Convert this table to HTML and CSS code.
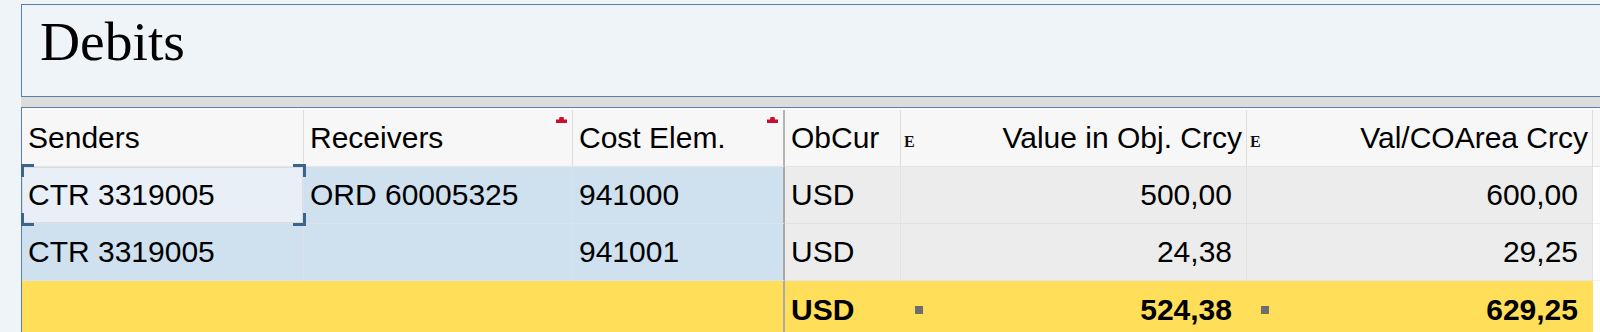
FILE: index.html
```html
<!DOCTYPE html>
<html>
<head>
<meta charset="utf-8">
<link rel="stylesheet" href="styles.css">
</head>
<body>
<div class="title-box"><h1 class="title">Debits</h1></div>
<div class="band"></div>
<div class="grid">
  <div class="c h">Senders</div>
  <div class="c h">Receivers<span class="mark"><svg width="11" height="6" viewBox="0 0 11 6"><path d="M3.5 0H7.5L8 2.5H11V6H0V2.5H3Z" fill="#c8102e"/></svg></span></div>
  <div class="c h thick">Cost Elem.<span class="mark"><svg width="11" height="6" viewBox="0 0 11 6"><path d="M3.5 0H7.5L8 2.5H11V6H0V2.5H3Z" fill="#c8102e"/></svg></span></div>
  <div class="c h">ObCur</div>
  <div class="c h sum"><span class="e">E</span><span>Value in Obj. Crcy</span></div>
  <div class="c h sum"><span class="e">E</span><span>Val/COArea Crcy</span></div>
  <div class="c h last"></div>

  <div class="c k sel">CTR 3319005<span class="brackets"><i class="tl"></i><i class="tr"></i><i class="bl"></i><i class="br"></i></span></div>
  <div class="c k">ORD 60005325</div>
  <div class="c k thick">941000</div>
  <div class="c n">USD</div>
  <div class="c n r">500,00</div>
  <div class="c n r">600,00</div>
  <div class="c e-cell"></div>

  <div class="c k">CTR 3319005</div>
  <div class="c k"></div>
  <div class="c k thick">941001</div>
  <div class="c n">USD</div>
  <div class="c n r">24,38</div>
  <div class="c n r">29,25</div>
  <div class="c e-cell"></div>

  <div class="c t"></div>
  <div class="c t"></div>
  <div class="c t thick"></div>
  <div class="c t b">USD</div>
  <div class="c t b tot"><span class="sq"></span><span>524,38</span></div>
  <div class="c t b tot"><span class="sq"></span><span>629,25</span></div>
  <div class="c e-cell tl-row"></div>
</div>
</body>
</html>
```
FILE: styles.css
```css
html, body {
  margin: 0;
  padding: 0;
  background: #eff4f9;
  overflow: hidden;
}
body {
  width: 1600px;
  height: 332px;
}
.title-box {
  margin: 4px -20px 0 21px;
  height: 91px;
  border: 1px solid #5a80aa;
  background: #eff4f9;
}
.title {
  margin: 0;
  padding: 5px 0 0 18px;
  font-family: "Liberation Serif", "Times New Roman", serif;
  font-weight: normal;
  font-size: 55.5px;
  line-height: normal;
  color: #000;
}
.band {
  margin-left: 21px;
  height: 10px;
  background: #dcdcdc;
}
.grid {
  margin-left: 21px;
  border-left: 1px solid #5a80aa;
  border-top: 1px solid #5a80aa;
  padding-top: 2px;
  background: #fbfbfb;
  display: grid;
  grid-template-columns: 282px 269px 212px 116px 346px 346px 1fr;
  grid-auto-rows: 57px;
  font-family: "Liberation Sans", Arial, sans-serif;
  font-size: 30px;
  color: #000;
}
.c {
  box-sizing: border-box;
  position: relative;
  display: flex;
  align-items: center;
  padding: 0 4px 0 6px;
  border-right: 1px solid #e0e0e0;
  border-bottom: 1px solid #e0e0e0;
  white-space: nowrap;
}
.h {
  background: #f7f7f7;
  border-right-color: #dedede;
  border-bottom-color: #e4e4e4;
}
.h.last {
  border-right: none;
}
.thick {
  border-right: 2px solid #a9a9a9;
}
.h.thick {
  border-right-color: #b4b4b4;
}
.mark {
  position: absolute;
  top: 3px;
  right: 5px;
  line-height: 0;
}
.sum {
  justify-content: space-between;
  padding-left: 3px;
}
.e {
  font-family: "Liberation Serif", "Times New Roman", serif;
  font-weight: bold;
  font-size: 16px;
  margin-top: 7px;
  color: #111;
}
.k {
  background: #cfe0ef;
  border-right-color: #dbe3ea;
  border-bottom-color: #dbe3ea;
}
.k.thick {
  border-right-color: #a9a9a9;
}
.sel {
  background: #e9eff7;
  box-shadow: inset 0 0 0 1px #dcdcdc;
}
.brackets {
  position: absolute;
  top: -3px;
  bottom: -3px;
  left: -1px;
  right: -3px;
  z-index: 2;
  pointer-events: none;
}
.brackets i {
  position: absolute;
  width: 10px;
  height: 10px;
  border: 0 solid #3c6490;
}
.brackets .tl { top: 0; left: 0; border-top-width: 3px; border-left-width: 3px; }
.brackets .tr { top: 0; right: 0; border-top-width: 3px; border-right-width: 3px; }
.brackets .bl { bottom: 0; left: 0; border-bottom-width: 3px; border-left-width: 3px; }
.brackets .br { bottom: 0; right: 0; border-bottom-width: 3px; border-right-width: 3px; }
.n {
  background: #ececec;
  border-right-color: #e2e2e2;
  border-bottom-color: #e2e2e2;
}
.r {
  justify-content: flex-end;
  padding-right: 14px;
}
.e-cell {
  background: #ffffff;
  border-right: none;
  border-bottom-color: #f0f0f0;
}
.t {
  background: #ffde59;
  border-right-color: #ffde59;
  border-bottom: none;
}
.t.thick {
  border-right: 2px solid #a9a9a9;
}
.b {
  font-weight: bold;
}
.tot {
  justify-content: space-between;
  padding-left: 14px;
  padding-right: 14px;
}
.sq {
  width: 8px;
  height: 8px;
  background: #6e6e6e;
}
.tl-row {
  border-bottom: none;
}
```
